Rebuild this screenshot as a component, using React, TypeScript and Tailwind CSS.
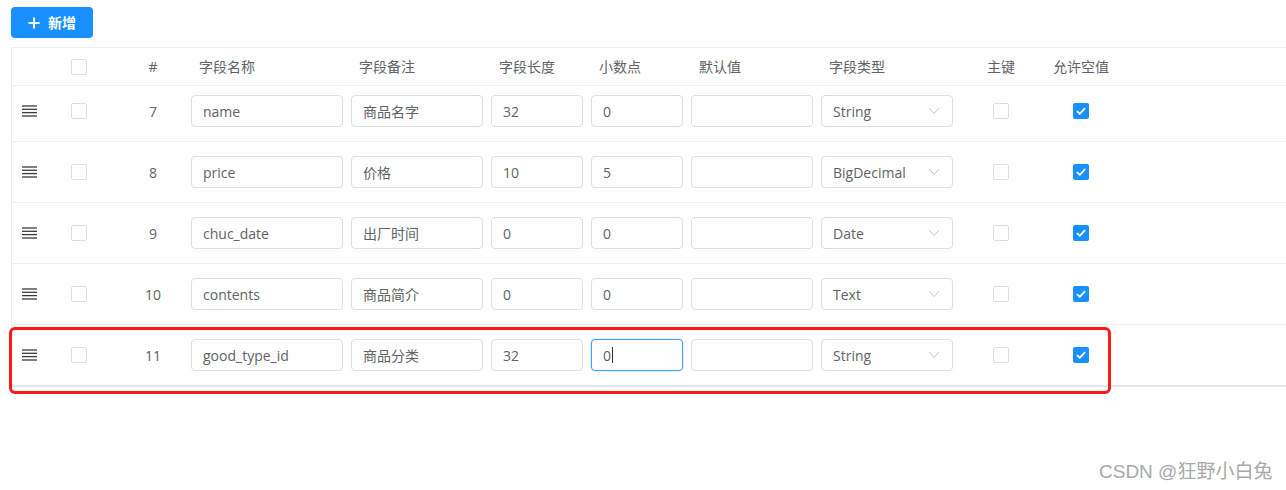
import React from "react";

type Row = {
  no: number;
  name: string;
  remark: string;
  length: string;
  scale: string;
  type: string;
  focused?: boolean;
};

const rows: Row[] = [
  { no: 7, name: "name", remark: "商品名字", length: "32", scale: "0", type: "String" },
  { no: 8, name: "price", remark: "价格", length: "10", scale: "5", type: "BigDecimal" },
  { no: 9, name: "chuc_date", remark: "出厂时间", length: "0", scale: "0", type: "Date" },
  { no: 10, name: "contents", remark: "商品简介", length: "0", scale: "0", type: "Text" },
  { no: 11, name: "good_type_id", remark: "商品分类", length: "32", scale: "0", type: "String", focused: true },
];

const font = { fontFamily: '"Open Sans", "Noto Sans CJK SC", sans-serif' };

function DragIcon() {
  return (
    <svg width="15" height="12" viewBox="0 0 15 12">
      <g stroke="#3a3a3a" strokeWidth="1.3">
        <line x1="0" y1="1" x2="15" y2="1" />
        <line x1="0" y1="4.3" x2="15" y2="4.3" />
        <line x1="0" y1="7.6" x2="15" y2="7.6" />
        <line x1="0" y1="11" x2="15" y2="11" />
      </g>
    </svg>
  );
}

function Checkbox({ checked }: { checked?: boolean }) {
  if (checked) {
    return (
      <span className="inline-flex h-4 w-4 items-center justify-center rounded-[2px] bg-[#1890ff]">
        <svg width="10" height="8" viewBox="0 0 10 8">
          <path d="M1 4.2 L3.8 6.8 L9 1.2" fill="none" stroke="white" strokeWidth="1.8" />
        </svg>
      </span>
    );
  }
  return <span className="inline-block h-4 w-4 rounded-[2px] border border-[#dcdfe6] bg-white" />;
}

function Field({ value, focused }: { value: string; focused?: boolean }) {
  return (
    <div
      className={
        "flex h-8 w-full items-center rounded-[4px] border bg-white px-[11px] text-[14px] text-[#606266] " +
        (focused ? "border-[#409eff] shadow-[0_0_0_1px_rgba(64,158,255,0.15)]" : "border-[#dcdfe6]")
      }
    >
      {value}
      {focused && <span className="ml-[1px] inline-block h-[16px] w-px bg-[#333]" />}
    </div>
  );
}

function Select({ value }: { value: string }) {
  return (
    <div className="flex h-8 w-full items-center justify-between rounded-[4px] border border-[#dcdfe6] bg-white pl-[11px] pr-[12px] text-[14px] text-[#606266]">
      <span>{value}</span>
      <svg width="12" height="8" viewBox="0 0 12 8">
        <path d="M1 1 L6 6.5 L11 1" fill="none" stroke="#c0c4cc" strokeWidth="1" />
      </svg>
    </div>
  );
}

export default function App() {
  return (
    <div className="relative h-[490px] w-[1286px] overflow-hidden bg-white" style={font}>
      <div className="pl-[11px] pt-[7px]">
        <button className="flex h-[31px] w-[82px] items-center justify-center gap-[8px] rounded-[4px] bg-[#1890ff] text-[14px] font-semibold text-white">
          <svg width="12" height="12" viewBox="0 0 12 12">
            <path d="M6 0.5 V11.5 M0.5 6 H11.5" stroke="white" strokeWidth="2" />
          </svg>
          新增
        </button>
      </div>

      <div className="ml-[11px] mt-[9px] border-l border-t border-[#ebeef5] text-[14px] text-[#606266]">
        <div className="flex h-[38px] items-center border-b border-[#ebeef5]">
          <div className="w-[33px]" />
          <div className="flex w-[68px] justify-center">
            <Checkbox />
          </div>
          <div className="w-[70px] pl-[10px] text-center">#</div>
          <div className="w-[160px] pl-[16px]">字段名称</div>
          <div className="w-[140px] pl-[16px]">字段备注</div>
          <div className="w-[100px] pl-[16px]">字段长度</div>
          <div className="w-[100px] pl-[16px]">小数点</div>
          <div className="w-[130px] pl-[16px]">默认值</div>
          <div className="w-[140px] pl-[16px]">字段类型</div>
          <div className="w-[96px] text-center">主键</div>
          <div className="w-[64px] text-center">允许空值</div>
          <div className="flex-1" />
        </div>

        {rows.map((r, i) => {
          const first = i === 0;
          const last = i === rows.length - 1;
          const rowCls = first
            ? "h-[56px] pb-[5px] border-b border-[#ebeef5]"
            : last
              ? "h-[62px] border-b-2 border-[#e4e7ed]"
              : "h-[61px] border-b border-[#ebeef5]";
          return (
            <div key={r.no} className={"flex items-center " + rowCls}>
              <div className="flex w-[33px] justify-center pl-[1px]">
                <DragIcon />
              </div>
              <div className="flex w-[68px] justify-center">
                <Checkbox />
              </div>
              <div className="w-[70px] pl-[10px] text-center">{r.no}</div>
              <div className="w-[160px] pl-[8px]">
                <Field value={r.name} />
              </div>
              <div className="w-[140px] pl-[8px]">
                <Field value={r.remark} />
              </div>
              <div className="w-[100px] pl-[8px]">
                <Field value={r.length} />
              </div>
              <div className="w-[100px] pl-[8px]">
                <Field value={r.scale} focused={r.focused} />
              </div>
              <div className="w-[130px] pl-[8px]">
                <Field value="" />
              </div>
              <div className="w-[140px] pl-[8px]">
                <Select value={r.type} />
              </div>
              <div className="flex w-[96px] justify-center">
                <Checkbox />
              </div>
              <div className="flex w-[64px] justify-center">
                <Checkbox checked />
              </div>
              <div className="flex-1" />
            </div>
          );
        })}
      </div>

      <div className="pointer-events-none absolute left-[9px] top-[327px] h-[67px] w-[1102px] rounded-[6px] border-[3px] border-[#ff1a1a]" />

      <div
        className="absolute left-[1099px] top-[458px] text-[19px] text-[#a8a8a8]"
        style={{ fontFamily: '"Liberation Sans", "Noto Sans CJK SC", sans-serif' }}
      >
        CSDN @狂野小白兔
      </div>
    </div>
  );
}
